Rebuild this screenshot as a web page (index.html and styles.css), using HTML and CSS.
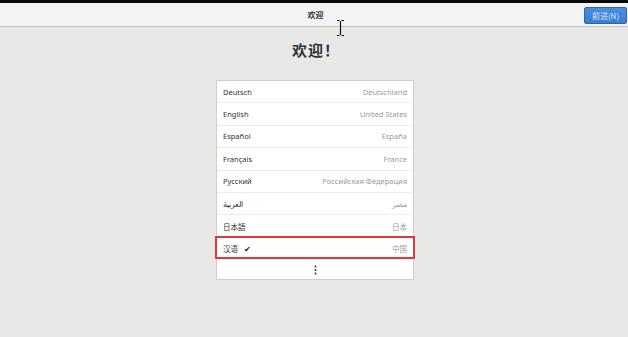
FILE: index.html
```html
<!DOCTYPE html>
<html>
<head>
<meta charset="utf-8">
<link rel="stylesheet" href="styles.css">
</head>
<body>
<div class="topline"></div>
<header class="bar">
  <span class="bar-title">欢迎</span>
  <button class="next">前进(N)</button>
</header>
<main class="content">
  <h1 class="welcome">欢迎！</h1>
  <ul class="langs">
    <li class="row"><span class="lang">Deutsch</span><span class="region">Deutschland</span></li>
    <li class="row"><span class="lang">English</span><span class="region">United States</span></li>
    <li class="row"><span class="lang">Español</span><span class="region">España</span></li>
    <li class="row"><span class="lang">Français</span><span class="region">France</span></li>
    <li class="row"><span class="lang">Русский</span><span class="region">Российская Федерация</span></li>
    <li class="row"><span class="lang">العربية</span><span class="region">مصر</span></li>
    <li class="row"><span class="lang">日本語</span><span class="region">日本</span></li>
    <li class="row selected"><span class="lang">汉语 <span class="check">✔</span></span><span class="region">中国</span></li>
    <li class="row more"><svg width="3" height="10" viewBox="0 0 3 10"><circle cx="1.5" cy="1.5" r="1" fill="#2e3436"/><circle cx="1.5" cy="5" r="1" fill="#2e3436"/><circle cx="1.5" cy="8.5" r="1" fill="#2e3436"/></svg></li>
  </ul>
</main>
<svg class="cursor" width="9" height="18" viewBox="0 0 9 18"><path d="M1 1.5h2.5M5.5 1.5H8M4.5 2v14M1 16.5h2.5M5.5 16.5H8" stroke="#111" stroke-width="1.2" fill="none"/></svg>
</body>
</html>
```
FILE: styles.css
```css
* { box-sizing: border-box; }
html, body { margin: 0; padding: 0; }
body {
  width: 628px;
  height: 337px;
  background: #e8e8e7;
  font-family: "Noto Sans", "Noto Sans CJK SC", sans-serif;
  color: #2e3436;
  position: relative;
  overflow: hidden;
}
.topline { height: 3px; background: #0a0a0a; }
.bar {
  height: 24px;
  background: #f4f4f4;
  border-bottom: 1px solid #c3c3c1;
  display: flex;
  align-items: center;
  justify-content: center;
  position: relative;
}
.bar-title {
  font-size: 8px;
  font-weight: bold;
  color: #2e3436;
  margin-left: 3px;
}
.next {
  position: absolute;
  right: 1px;
  top: 4px;
  height: 17px;
  width: 43px;
  border: 1px solid #2a65b8;
  border-radius: 2px;
  background: linear-gradient(#4a8ee0, #3a7dd4);
  color: #dfe9f7;
  font-family: "Noto Sans CJK SC", sans-serif;
  font-size: 8px;
  padding: 0;
}
.content {
  display: flex;
  flex-direction: column;
  align-items: center;
}
.welcome {
  margin: 13px 0 0 4px;
  font-size: 15px;
  line-height: 20px;
  font-weight: bold;
  color: #2e3436;
  font-family: "Noto Sans CJK SC", sans-serif;
  letter-spacing: 1px;
}
.langs {
  list-style: none;
  margin: 20px 0 0 2px;
  padding: 0;
  width: 198px;
  background: #fff;
  border: 1px solid #cfcfcd;
}
.row {
  height: 22.4px;
  display: flex;
  align-items: center;
  justify-content: space-between;
  padding: 0 6px 0 6px;
  border-bottom: 1px solid #ececec;
  font-size: 7.5px;
  position: relative;
}
.row:last-child { border-bottom: none; }
.lang { color: #2e3436; }
.region { color: #9a9a9a; }
.check { font-size: 8px; margin-left: 4px; color: #111; }
.selected::after {
  content: "";
  position: absolute;
  left: -2px;
  right: -2px;
  top: -2px;
  bottom: 0;
  border: 2px solid #e3373b;
}
.more { justify-content: center; height: 19px; }
.cursor {
  position: absolute;
  left: 336px;
  top: 19px;
}
```
